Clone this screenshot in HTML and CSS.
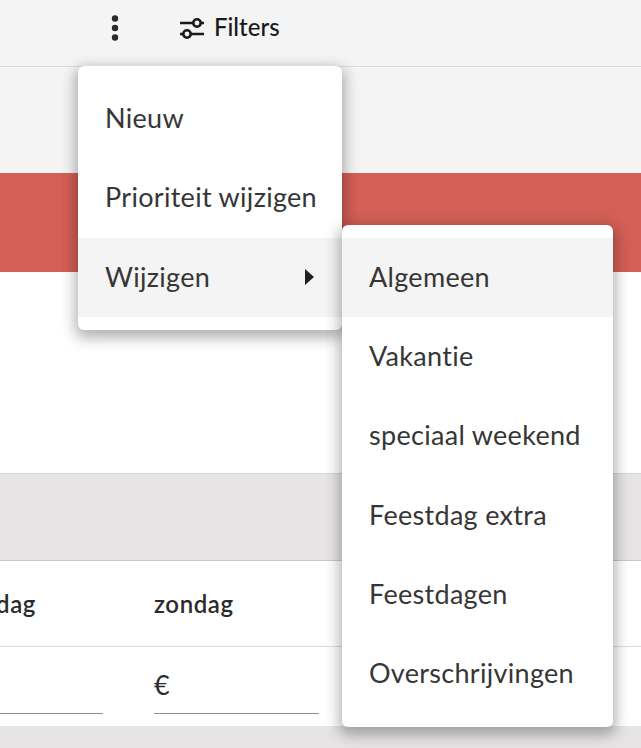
FILE: index.html
```html
<!DOCTYPE html>
<html lang="nl">
<head>
<meta charset="utf-8">
<title>Filters</title>
<link rel="stylesheet" href="styles.css">
</head>
<body>
<header class="topbar">
  <svg class="dots" width="8" height="28" viewBox="0 0 8 28"><circle cx="4" cy="4.5" r="3.2"/><circle cx="4" cy="14" r="3.2"/><circle cx="4" cy="23.5" r="3.2"/></svg>
  <div class="filters">
    <svg class="tune" width="26" height="22" viewBox="0 0 26 22"><path d="M1 6H14M22 6H25M1 17H4M12 17H25"/><circle cx="18" cy="6" r="3.7"/><circle cx="8" cy="17" r="3.7"/></svg>
    <span class="filters-label">Filters</span>
  </div>
</header>
<section class="subbar"></section>
<section class="redband"></section>
<section class="blank"></section>
<section class="greyband"></section>
<section class="table">
  <div class="thead">
    <div class="col col-a">dag</div>
    <div class="col col-b">zondag</div>
  </div>
  <div class="tbody">
    <div class="cell cell-a"></div>
    <div class="cell cell-b">€</div>
  </div>
</section>
<section class="footer"></section>

<nav class="menu menu-main">
  <div class="item">Nieuw</div>
  <div class="item">Prioriteit wijzigen</div>
  <div class="item active">Wijzigen<span class="caret"></span></div>
</nav>
<nav class="menu menu-sub">
  <div class="item active">Algemeen</div>
  <div class="item">Vakantie</div>
  <div class="item">speciaal weekend</div>
  <div class="item">Feestdag extra</div>
  <div class="item">Feestdagen</div>
  <div class="item">Overschrijvingen</div>
</nav>
</body>
</html>
```
FILE: styles.css
```css
* { box-sizing: border-box; }
html, body { margin: 0; padding: 0; }
body {
  width: 641px;
  height: 748px;
  overflow: hidden;
  position: relative;
  background: #e6e4e5;
  font-family: Lato, "Noto Sans", sans-serif;
  color: #2b2b2b;
}
.topbar {
  height: 67px;
  background: #f4f4f4;
  border-bottom: 1px solid #dcdcdc;
  display: flex;
  align-items: center;
  padding: 0 0 10px 111px;
}
.dots { fill: #2b2b2b; }
.filters {
  display: flex;
  align-items: center;
  gap: 9px;
  margin-left: 60px;
  font-size: 24px;
  font-weight: 500;
  color: #1a1a1a;
}
.filters-label { padding-bottom: 3px; }
.tune { fill: none; stroke: #1a1a1a; stroke-width: 2.6; }
.subbar { height: 106px; background: #f4f4f4; }
.redband { height: 99px; background: #d35f56; }
.blank { height: 202px; background: #fff; border-bottom: 1px solid #d4d4d4; }
.greyband { height: 87px; background: #e6e4e5; border-bottom: 1px solid #c9c7c8; }
.table { height: 165px; background: #fff; }
.thead {
  height: 86px;
  border-bottom: 1px solid #dcdcdc;
  display: flex;
  align-items: center;
  font-size: 24px;
  font-weight: 600;
  letter-spacing: 0.6px;
  color: #2b2b2b;
}
.col-a { width: 154px; margin-left: -4px; }
.col-b { margin-left: 4px; }
.tbody { display: flex; height: 79px; }
.cell { height: 67px; border-bottom: 1px solid #8f8f8f; font-size: 27px; padding-top: 21px; }
.cell-a { width: 103px; }
.cell-b { width: 165px; margin-left: 51px; }
.menu {
  position: absolute;
  background: #fff;
  border-radius: 6px;
  box-shadow: 0 5px 14px 3px rgba(0, 0, 0, 0.3);
  font-size: 27px;
  letter-spacing: 0.3px;
  color: #363636;
}
.menu-main { left: 78px; top: 66px; width: 264px; height: 264px; padding-top: 13.6px; }
.menu-main .item { padding-bottom: 3px; }
.menu-sub { left: 342px; top: 225px; width: 271px; height: 502px; padding-top: 13px; }
.item {
  height: 79.2px;
  display: flex;
  align-items: center;
  padding: 0 0 2px 27px;
  position: relative;
  white-space: nowrap;
}
.active { background: #f4f4f4; }
.caret {
  position: absolute;
  right: 28px;
  top: 31px;
  width: 0;
  height: 0;
  border-left: 9px solid #1f1f1f;
  border-top: 8px solid transparent;
  border-bottom: 8px solid transparent;
}
```
